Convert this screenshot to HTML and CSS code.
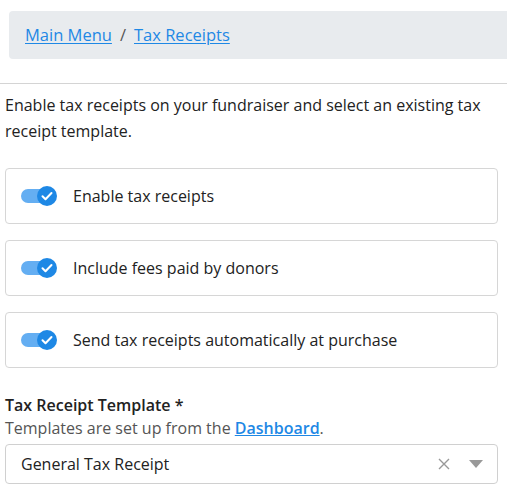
FILE: index.html
```html
<!DOCTYPE html>
<html>
<head>
<meta charset="utf-8">
<link rel="stylesheet" href="styles.css">
</head>
<body>
<nav class="crumbs">
  <a href="#">Main Menu</a><span class="sep">/</span><a href="#">Tax Receipts</a>
</nav>
<hr class="rule">
<main class="content">
  <p class="intro">Enable tax receipts on your fundraiser and select an existing tax receipt template.</p>
  <div class="card">
    <span class="toggle"><span class="track"></span><span class="knob"><svg viewBox="0 0 20 20" width="20" height="20"><path d="M5.5 10.3l3 3 6-6.3" fill="none" stroke="#fff" stroke-width="2" stroke-linecap="round" stroke-linejoin="round"/></svg></span></span>
    <span class="label">Enable tax receipts</span>
  </div>
  <div class="card">
    <span class="toggle"><span class="track"></span><span class="knob"><svg viewBox="0 0 20 20" width="20" height="20"><path d="M5.5 10.3l3 3 6-6.3" fill="none" stroke="#fff" stroke-width="2" stroke-linecap="round" stroke-linejoin="round"/></svg></span></span>
    <span class="label">Include fees paid by donors</span>
  </div>
  <div class="card">
    <span class="toggle"><span class="track"></span><span class="knob"><svg viewBox="0 0 20 20" width="20" height="20"><path d="M5.5 10.3l3 3 6-6.3" fill="none" stroke="#fff" stroke-width="2" stroke-linecap="round" stroke-linejoin="round"/></svg></span></span>
    <span class="label">Send tax receipts automatically at purchase</span>
  </div>
  <div class="field">
    <div class="field-label">Tax Receipt Template *</div>
    <div class="field-help">Templates are set up from the <a href="#">Dashboard</a>.</div>
    <div class="select">
      <span class="value">General Tax Receipt</span>
      <span class="clear"><svg viewBox="0 0 12 12" width="12" height="12"><path d="M1 1l10 10M11 1L1 11" stroke="#999" stroke-width="1.4" fill="none"/></svg></span>
      <span class="arrow"><svg viewBox="0 0 14 8" width="14" height="8"><path d="M0 0h14L7 8z" fill="#999"/></svg></span>
    </div>
  </div>
</main>
</body>
</html>
```
FILE: styles.css
```css
* { box-sizing: border-box; }
html, body { margin: 0; padding: 0; background: #fff; }
body {
  font-family: "Open Sans", "Noto Sans", sans-serif;
  font-size: 16px;
  color: #222;
}
.crumbs {
  margin: 11px 0 0 9px;
  width: 520px;
  height: 48px;
  background: #e8ebee;
  border-radius: 4px;
  padding: 0 0 1px 16px;
  display: flex;
  align-items: center;
  font-size: 16.5px;
}
.crumbs a { color: #1e88e5; text-decoration: underline; text-underline-offset: 2px; }
.crumbs .sep { color: #555; margin: 0 8px; }
.rule {
  margin: 24px 0 0 0;
  border: 0;
  border-top: 1px solid #d4d4d4;
  height: 0;
}
.content { padding: 0 9px 0 5px; }
.intro {
  margin: 8px 0 0 0;
  font-size: 16px;
  line-height: 26px;
  color: #222;
}
.card {
  margin-top: 24px;
  height: 56px;
  border: 1px solid #d6d6d6;
  border-radius: 4px;
  display: flex;
  align-items: center;
  padding-left: 15px;
}
.card + .card { margin-top: 16px; }
.toggle {
  position: relative;
  width: 37px;
  height: 20px;
  flex: none;
}
.track {
  position: absolute;
  left: 0; top: 3px;
  width: 34px; height: 14px;
  border-radius: 7px;
  background: #64aef2;
}
.knob {
  position: absolute;
  left: 16px; top: 0;
  width: 20px; height: 20px;
  border-radius: 50%;
  background: #1e88e5;
  display: flex;
}
.label { margin-left: 15px; color: #222; }
.field { margin-top: 26px; }
.field-label { font-weight: 600; line-height: 22px; color: #222; }
.field-help { color: #555; line-height: 24px; }
.field-help a { color: #1e88e5; font-weight: 600; text-decoration: underline; }
.select {
  margin-top: 4px;
  height: 40px;
  border: 1px solid #d0d0d0;
  border-radius: 4px;
  display: flex;
  align-items: center;
  padding: 0 14px 0 15px;
}
.select .value { flex: 1; color: #222; }
.select .clear { display: flex; margin-right: 19px; }
.select .arrow { display: flex; }
```
